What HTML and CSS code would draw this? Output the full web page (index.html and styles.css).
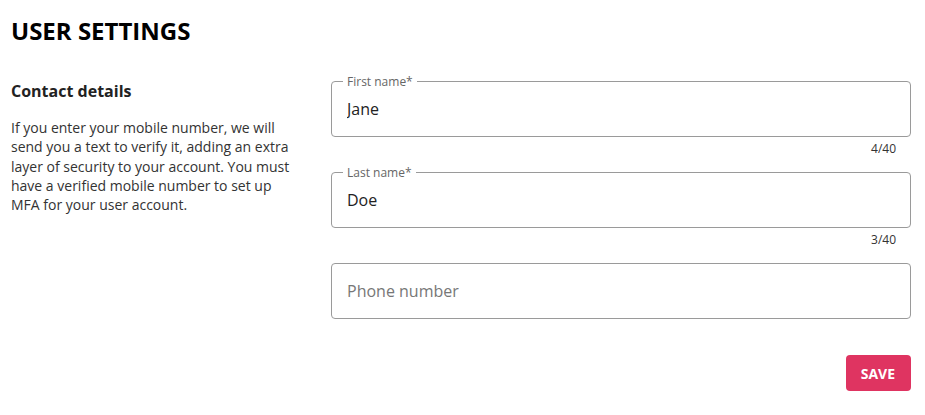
FILE: index.html
```html
<!DOCTYPE html>
<html lang="en">
<head>
<meta charset="utf-8">
<title>User settings</title>
<link rel="stylesheet" href="styles.css">
</head>
<body>
<main class="page">
  <h1 class="title">USER SETTINGS</h1>
  <section class="content">
    <div class="intro">
      <h2 class="intro-title">Contact details</h2>
      <p class="intro-text">If you enter your mobile number, we will send you a text to verify it, adding an extra layer of security to your account. You must have a verified mobile number to set up MFA for your user account.</p>
    </div>
    <form class="form">
      <div class="field-block">
        <div class="field">
          <span class="field-label">First name*</span>
          <input class="field-input" type="text" value="Jane">
        </div>
        <div class="field-helper">4/40</div>
      </div>
      <div class="field-block">
        <div class="field">
          <span class="field-label">Last name*</span>
          <input class="field-input" type="text" value="Doe">
        </div>
        <div class="field-helper">3/40</div>
      </div>
      <div class="field-block field-block-last">
        <div class="field">
          <input class="field-input" type="text" placeholder="Phone number">
        </div>
      </div>
      <div class="actions">
        <button class="btn-save" type="button">SAVE</button>
      </div>
    </form>
  </section>
</main>
</body>
</html>
```

FILE: styles.css
```css
* { box-sizing: border-box; }
html, body { margin: 0; padding: 0; background: #fff; }
body {
  font-family: "Open Sans", "Noto Sans", sans-serif;
  color: #222;
}
.page {
  padding: 15px 14px 0 11px;
}
.title {
  margin: 0 0 33px;
  font-size: 24px;
  line-height: 32px;
  font-weight: 700;
  color: #000;
}
.content {
  display: flex;
  align-items: flex-start;
}
.intro {
  width: 290px;
  flex: none;
}
.intro-title {
  margin: 0 0 16px;
  font-size: 16px;
  font-weight: 700;
  line-height: 22px;
  color: #222;
}
.intro-text {
  margin: 0;
  font-size: 14px;
  line-height: 19.25px;
  color: #333;
}
.form {
  flex: 1;
  margin-left: 30px;
  padding-top: 1px;
}
.field-block {
  margin-bottom: 16px;
}
.field-block-last {
  margin-bottom: 36px;
}
.field {
  position: relative;
  height: 56px;
  border: 1px solid #9a9a9a;
  border-radius: 4px;
}
.field-label {
  position: absolute;
  top: -8px;
  left: 11px;
  padding: 0 4px;
  background: #fff;
  font-size: 12px;
  line-height: 15px;
  color: #666;
}
.field-input {
  display: block;
  width: 100%;
  height: 100%;
  border: 0;
  outline: none;
  background: transparent;
  padding: 0 15px;
  font-family: inherit;
  font-size: 16px;
  color: #222;
}
.field-input::placeholder {
  color: #777;
  opacity: 1;
}
.field-helper {
  margin-top: 4px;
  padding-right: 15px;
  text-align: right;
  font-size: 12px;
  line-height: 15px;
  color: #333;
}
.actions {
  display: flex;
  justify-content: flex-end;
}
.btn-save {
  height: 36px;
  padding: 0 16px 0 15px;
  border: 0;
  border-radius: 4px;
  background: #df3461;
  color: #fff;
  font-family: inherit;
  font-size: 14px;
  font-weight: 700;
  cursor: pointer;
}
```
